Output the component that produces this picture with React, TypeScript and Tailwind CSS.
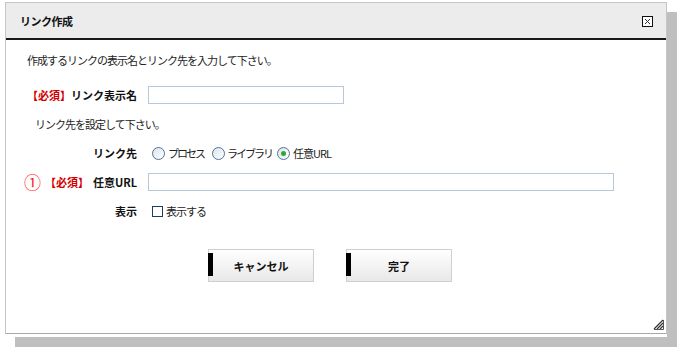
import React from "react";

const Radio = ({ checked }: { checked?: boolean }) => (
  <span className="flex size-[13px] shrink-0 items-center justify-center rounded-full border border-[#4f7399] bg-gradient-to-br from-[#dde4ec] to-white">
    {checked && <span className="size-[5px] rounded-full bg-[#2aa838]" />}
  </span>
);

const Required = () => <span className="font-bold text-[#d40000]">【必須】</span>;

const Button = ({ label }: { label: string }) => (
  <button className="relative flex h-[33px] w-[106px] items-center justify-center border border-[#cfcfcf] bg-gradient-to-b from-white to-[#e8e8e8] text-[11px] font-bold text-[#111]">
    <span className="absolute -left-px top-[3px] h-[23px] w-[5px] bg-black" />
    {label}
  </button>
);

export default function App() {
  return (
    <div className="h-[355px] w-[686px] bg-white pl-[5px] pt-[2px] font-['Noto_Sans_CJK_JP',sans-serif] text-[11px] leading-[14px] text-[#222]">
      <div className="flex h-[335px] w-[662px] flex-col bg-white pb-[3px] shadow-[10px_10px_0_#bfbfbf]">
        <div className="relative flex-1 border border-[#c6c6c6] border-b-[#a9a9a9]">
          <div className="flex h-[37px] items-center justify-between border-b-2 border-[#1a1a1a] bg-[#ececec] pl-[14px] pr-[13px]">
            <span className="font-bold tracking-[-0.5px] text-[#111]">リンク作成</span>
            <svg width="11" height="11" viewBox="0 0 11 11" className="mt-px">
              <rect x="0.5" y="0.5" width="10" height="10" fill="#fff" stroke="#111" />
              <path d="M3 3 L8 8 M8 3 L3 8" stroke="#333" strokeWidth="1" />
            </svg>
          </div>

          <div className="flex flex-col pt-[13px]">
            <p className="pl-[21px] tracking-[-1px]">作成するリンクの表示名とリンク先を入力して下さい。</p>

            <div className="mt-[19px] flex h-[18px] items-center">
              <div className="flex w-[131px] justify-end">
                <Required />
                <span className="font-bold text-[#111]">リンク表示名</span>
              </div>
              <input className="ml-[11px] h-[18px] w-[196px] border border-[#b6c9da] bg-white outline-none" />
            </div>

            <p className="mt-[13px] pl-[29px] tracking-[-1px]">リンク先を設定して下さい。</p>

            <div className="mt-[13px] flex h-[18px] items-center">
              <div className="w-[131px] text-right font-bold text-[#111]">リンク先</div>
              <div className="ml-[15px] flex items-center whitespace-nowrap tracking-[-2px]">
                <Radio />
                <span className="ml-[3px] mr-[9px] w-[35px]">プロセス</span>
                <Radio />
                <span className="ml-[2px] mr-[9px] w-[41px]">ライブラリ</span>
                <Radio checked />
                <span className="ml-[3px] tracking-[-1px]">任意URL</span>
              </div>
            </div>

            <div className="mt-[11px] flex h-[18px] items-center">
              <div className="flex w-[131px] items-center justify-end">
                <span className="mr-[4px] text-[17px] leading-[18px] text-[#ff1a1a]">①</span>
                <Required />
                <span className="ml-[4px] font-bold text-[#111]">任意URL</span>
              </div>
              <input className="ml-[11px] h-[18px] w-[466px] border border-[#b6c9da] bg-white outline-none" />
            </div>

            <div className="mt-[11px] flex h-[18px] items-center">
              <div className="w-[131px] text-right font-bold text-[#111]">表示</div>
              <span className="ml-[15px] size-[11px] border border-[#1d3c63] bg-white" />
              <span className="ml-[3px] tracking-[-1px]">表示する</span>
            </div>

            <div className="mt-[29px] flex gap-[32px] pl-[202px]">
              <Button label="キャンセル" />
              <Button label="完了" />
            </div>
          </div>

          <svg width="11" height="11" viewBox="0 0 11 11" className="absolute bottom-[3px] right-[2px]">
            <path d="M10 1 L1 10 M10 4 L4 10 M10 7 L7 10" stroke="#333" strokeWidth="1.2" />
            <path d="M1 10.5 H10.5 V1" stroke="#555" strokeWidth="1" fill="none" />
          </svg>
        </div>
      </div>
    </div>
  );
}
